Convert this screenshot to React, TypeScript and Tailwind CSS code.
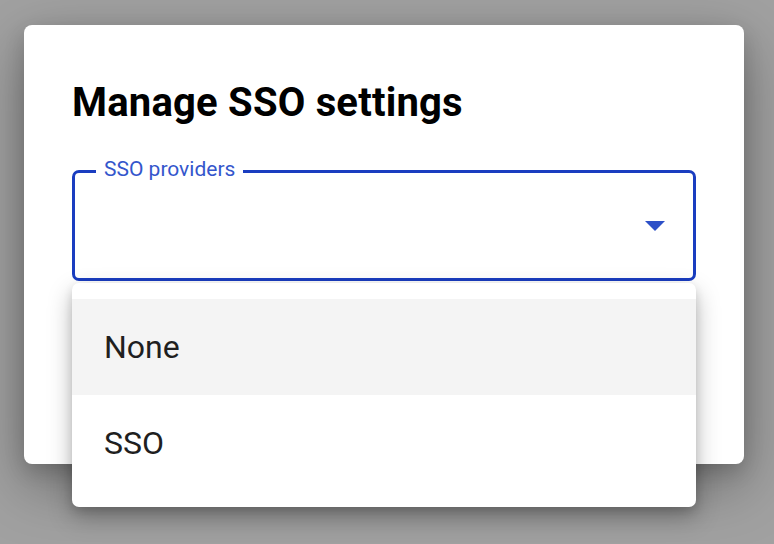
import { useState } from "react";

const options = ["None", "SSO"];

export default function App() {
  const [hovered] = useState(0);

  return (
    <div
      className="h-[544px] w-[774px] overflow-hidden bg-[#a1a1a1] pl-[24px] pt-[25px]"
      style={{ fontFamily: "Roboto, 'Liberation Sans', sans-serif" }}
    >
      {/* dialog */}
      <div className="h-[439px] w-[720px] rounded-[8px] bg-white px-[48px] pt-[58px] shadow-[0_20px_60px_rgba(0,0,0,0.35),0_8px_20px_rgba(0,0,0,0.15)]">
        <h2 className="text-[40px] font-bold leading-none tracking-[0.2px] text-black">
          Manage SSO settings
        </h2>

        {/* select */}
        <div className="relative mt-[47px]">
          <div className="flex h-[111px] w-[624px] items-center justify-end rounded-[7px] border-[3px] border-[#1a3dc0] pr-[28px]">
            <svg width="20" height="10" viewBox="0 0 20 10" className="mt-[1px]">
              <path d="M0 0h20L10 10z" fill="#2d50c8" />
            </svg>
          </div>
          <span className="absolute left-[24px] top-[-14px] bg-white px-[8px] text-[21px] leading-[26px] text-[#3456cc]">
            SSO providers
          </span>

          {/* menu */}
          <ul className="absolute left-0 top-[113px] z-10 w-[624px] rounded-[7px] bg-white py-[16px] shadow-[0_10px_24px_rgba(0,0,0,0.28),0_4px_10px_rgba(0,0,0,0.12)]">
            {options.map((o, i) => (
              <li
                key={o}
                className={`flex h-[96px] items-center pl-[32px] text-[32px] text-[#1f1f1f] ${
                  i === hovered ? "bg-[#f4f4f4]" : ""
                }`}
              >
                {o}
              </li>
            ))}
          </ul>
        </div>
      </div>
    </div>
  );
}
